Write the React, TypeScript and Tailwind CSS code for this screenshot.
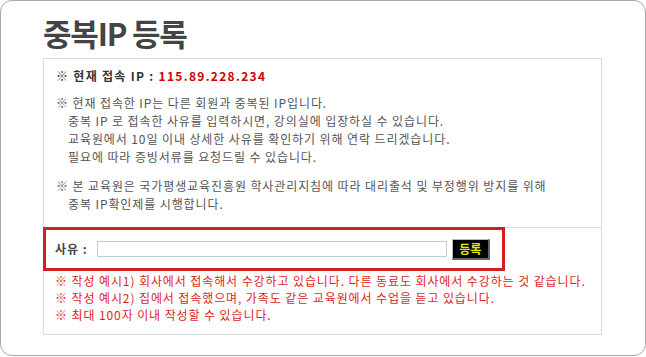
import React from "react";

const font = { fontFamily: '"Noto Sans CJK KR", "Noto Sans", sans-serif' };

export default function App() {
  return (
    <div className="w-[646px] h-[357px] bg-white" style={font}>
      <div className="w-[646px] h-[356px] border border-[#a9a9a9] rounded-[12px] bg-white pt-[12px] pl-[42px]">
        <h1 className="text-[31px] leading-[40px] font-bold text-[#444] tracking-[-1.2px]">중복IP 등록</h1>
        <div className="mt-[5px] w-[559px]">
          <div className="border border-[#dcdcdc] h-[170px] pl-[12px] pt-[8px] text-[12px] text-[#555] tracking-[0.9px]">
            <p className="leading-[18px] font-bold text-[#333] tracking-[1.3px]">
              ※ 현재 접속 IP : <span className="text-[#d10000]">115.89.228.234</span>
            </p>
            <div className="mt-[9px] leading-[18px]">
              <p>※ 현재 접속한 IP는 다른 회원과 중복된 IP입니다.</p>
              <p className="pl-[12px]">중복 IP 로 접속한 사유를 입력하시면, 강의실에 입장하실 수 있습니다.</p>
              <p className="pl-[12px]">교육원에서 10일 이내 상세한 사유를 확인하기 위해 연락 드리겠습니다.</p>
              <p className="pl-[12px]">필요에 따라 증빙서류를 요청드릴 수 있습니다.</p>
            </div>
            <div className="mt-[11px] leading-[18px]">
              <p>※ 본 교육원은 국가평생교육진흥원 학사관리지침에 따라 대리출석 및 부정행위 방지를 위해</p>
              <p className="pl-[12px]">중복 IP확인제를 시행합니다.</p>
            </div>
          </div>
          <div className="border-x border-b border-[#dcdcdc] h-[108px]">
            <div className="-ml-px -mt-px w-[462px] h-[44px] border-[3px] border-[#d21f1f] flex items-center pl-[9px]">
              <span className="text-[12px] font-bold text-[#444] tracking-[1px]">사유 :</span>
              <input
                type="text"
                className="ml-[9px] w-[350px] h-[16px] border border-[#c8c8c8] bg-white outline-none"
              />
              <button className="ml-[5px] w-[38px] h-[21px] bg-black border-t border-l border-t-[#bbb] border-l-[#bbb] border-r-2 border-b-2 border-r-[#666] border-b-[#666] text-[#e8e800] text-[12px] font-bold leading-none flex items-center justify-center">
                등록
              </button>
            </div>
            <div className="pl-[11px] pt-[1px] text-[12px] leading-[17px] text-[#e01e1e] tracking-[0.9px]">
              <p>※ 작성 예시1) 회사에서 접속해서 수강하고 있습니다. 다른 동료도 회사에서 수강하는 것 같습니다.</p>
              <p>※ 작성 예시2) 집에서 접속했으며, 가족도 같은 교육원에서 수업을 듣고 있습니다.</p>
              <p>※ 최대 100자 이내 작성할 수 있습니다.</p>
            </div>
          </div>
        </div>
      </div>
    </div>
  );
}
